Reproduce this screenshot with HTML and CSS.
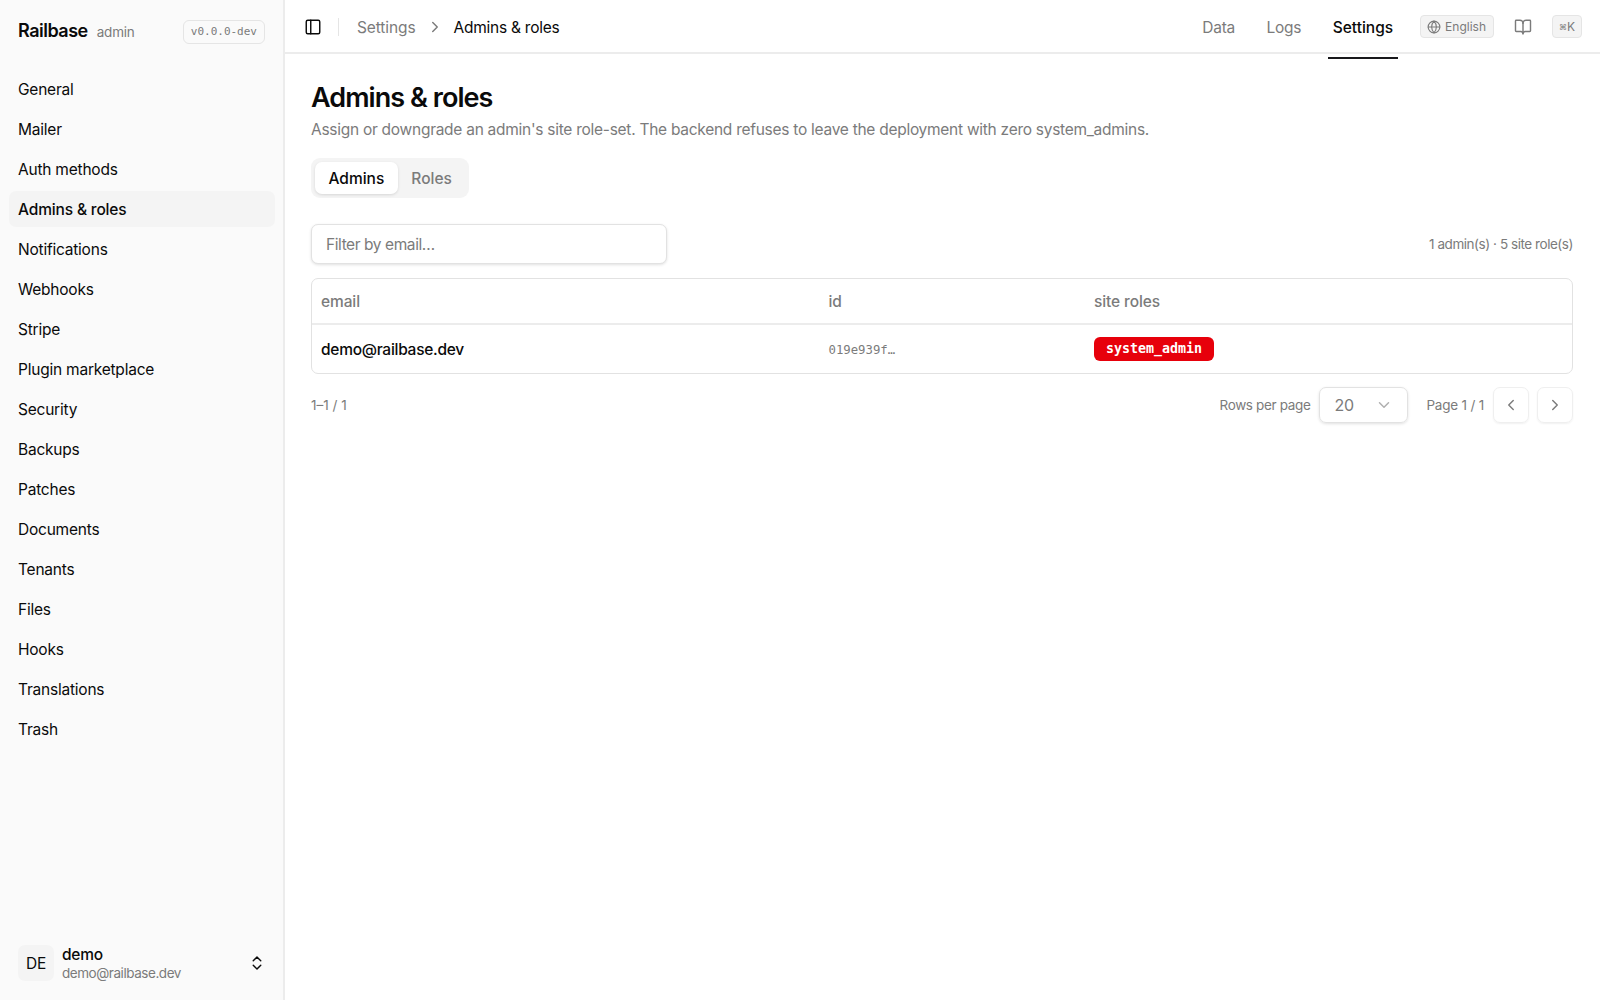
FILE: index.html
```
<!DOCTYPE html>
<html lang="en">
<head>
    <meta charset="UTF-8">
    <title>Railbase admin</title>
    <link rel="stylesheet" href="styles.css">
</head>
<body>
<div class="app">
    <aside class="sidebar">
        <div class="brand">
            <span class="brand-name">Railbase</span>
            <span class="brand-sub">admin</span>
            <span class="version">v0.0.0-dev</span>
        </div>
        <nav class="menu">
            <a class="menu-item">General</a>
            <a class="menu-item">Mailer</a>
            <a class="menu-item">Auth methods</a>
            <a class="menu-item active">Admins &amp; roles</a>
            <a class="menu-item">Notifications</a>
            <a class="menu-item">Webhooks</a>
            <a class="menu-item">Stripe</a>
            <a class="menu-item">Plugin marketplace</a>
            <a class="menu-item">Security</a>
            <a class="menu-item">Backups</a>
            <a class="menu-item">Patches</a>
            <a class="menu-item">Documents</a>
            <a class="menu-item">Tenants</a>
            <a class="menu-item">Files</a>
            <a class="menu-item">Hooks</a>
            <a class="menu-item">Translations</a>
            <a class="menu-item">Trash</a>
        </nav>
        <div class="user">
            <span class="avatar">DE</span>
            <div class="user-info">
                <span class="user-name">demo</span>
                <span class="user-email">demo@railbase.dev</span>
            </div>
            <svg class="icon user-toggle" viewBox="0 0 24 24"><path d="m7 15 5 5 5-5"/><path d="m7 9 5-5 5 5"/></svg>
        </div>
    </aside>

    <div class="page">
        <header class="topbar">
            <svg class="icon panel-icon" viewBox="0 0 24 24"><rect width="18" height="18" x="3" y="3" rx="2"/><path d="M9 3v18"/></svg>
            <span class="separator"></span>
            <span class="crumb">Settings</span>
            <svg class="icon crumb-arrow" viewBox="0 0 24 24"><path d="m9 18 6-6-6-6"/></svg>
            <span class="crumb current">Admins &amp; roles</span>
            <nav class="tabs-top">
                <a class="top-link">Data</a>
                <a class="top-link">Logs</a>
                <a class="top-link active">Settings</a>
            </nav>
            <button class="chip lang">
                <svg class="icon globe" viewBox="0 0 24 24"><circle cx="12" cy="12" r="10"/><path d="M12 2a14.5 14.5 0 0 0 0 20 14.5 14.5 0 0 0 0-20"/><path d="M2 12h20"/></svg>
                <span>English</span>
            </button>
            <svg class="icon book" viewBox="0 0 24 24"><path d="M12 7v14"/><path d="M3 18a1 1 0 0 1-1-1V4a1 1 0 0 1 1-1h5a4 4 0 0 1 4 4 4 4 0 0 1 4-4h5a1 1 0 0 1 1 1v13a1 1 0 0 1-1 1h-6a3 3 0 0 0-3 3 3 3 0 0 0-3-3z"/></svg>
            <button class="chip kbd"><span class="cmd">⌘</span><span>K</span></button>
        </header>

        <main class="content">
            <h1 class="title">Admins &amp; roles</h1>
            <p class="subtitle">Assign or downgrade an admin's site role-set. The backend refuses to leave the deployment with zero system_admins.</p>

            <div class="tabs">
                <button class="tab active">Admins</button>
                <button class="tab">Roles</button>
            </div>

            <div class="toolbar">
                <input class="filter" type="text" placeholder="Filter by email…">
                <span class="summary">1 admin(s) · 5 site role(s)</span>
            </div>

            <div class="table">
                <div class="row head">
                    <span>email</span>
                    <span>id</span>
                    <span>site roles</span>
                </div>
                <div class="row">
                    <span class="email">demo@railbase.dev</span>
                    <span class="id">019e939f…</span>
                    <span class="badge">system_admin</span>
                </div>
            </div>

            <div class="pager">
                <span class="range">1–1 / 1</span>
                <span class="rows-label">Rows per page</span>
                <button class="select">
                    <span>20</span>
                    <svg class="icon select-arrow" viewBox="0 0 24 24"><path d="m6 9 6 6 6-6"/></svg>
                </button>
                <span class="page-no">Page 1 / 1</span>
                <button class="page-btn"><svg class="icon" viewBox="0 0 24 24"><path d="m15 18-6-6 6-6"/></svg></button>
                <button class="page-btn"><svg class="icon" viewBox="0 0 24 24"><path d="m9 18 6-6-6-6"/></svg></button>
            </div>
        </main>
    </div>
</div>
</body>
</html>
```
FILE: styles.css
```
*{
    box-sizing: border-box;
}
body{
    margin: 0;
    font-family: Inter, "Liberation Sans", sans-serif;
    font-size: 15.5px;
    letter-spacing: -0.27px;
    color: #0a0a0a;
    background: #fff;
}
button{
    font: inherit;
    letter-spacing: inherit;
    padding: 0;
    background: none;
    border: 0;
}
.icon{
    flex: none;
    width: 18px;
    height: 18px;
    fill: none;
    stroke: currentColor;
    stroke-width: 1.9;
    stroke-linecap: round;
    stroke-linejoin: round;
}
.app{
    display: flex;
    height: 1000px;
}

/* sidebar */
.sidebar{
    display: flex;
    flex-direction: column;
    width: 285px;
    flex: none;
    background: #fafafa;
    border-right: 2px solid #ececec;
}
.brand{
    display: flex;
    align-items: center;
    height: 64px;
    padding: 0 18px;
}
.brand-name{
    padding-bottom: 3px;
    font-size: 18px;
    font-weight: 600;
    letter-spacing: -0.5px;
}
.brand-sub{
    margin-left: 9px;
    padding-bottom: 1px;
    font-size: 13.5px;
    letter-spacing: -0.2px;
    color: #7b7b7b;
}
.version{
    margin-left: auto;
    padding: 0 7px;
    line-height: 22px;
    border: 1px solid #e5e5e5;
    border-radius: 6px;
    font-family: "DejaVu Sans Mono", monospace;
    font-size: 11px;
    letter-spacing: 0;
    color: #7b7b7b;
}
.menu{
    display: flex;
    flex-direction: column;
    gap: 4px;
    padding: 7px 8px 0 9px;
}
.menu-item{
    height: 36px;
    line-height: 37px;
    padding: 0 9px;
    border-radius: 7px;
    letter-spacing: -0.22px;
}
.menu-item.active{
    background: #f4f4f4;
    font-weight: 500;
    letter-spacing: -0.15px;
}
.user{
    display: flex;
    align-items: center;
    margin-top: auto;
    padding: 0 17px 17px 18px;
}
.avatar{
    width: 36px;
    height: 36px;
    line-height: 37px;
    border-radius: 7px;
    background: #f4f4f4;
    text-align: center;
}
.user-info{
    display: flex;
    flex-direction: column;
    margin-left: 8px;
    padding-top: 2px;
    line-height: 19px;
}
.user-name{
    font-weight: 500;
}
.user-email{
    font-size: 13.5px;
    letter-spacing: -0.45px;
    color: #7b7b7b;
}
.user-toggle{
    margin-left: auto;
}

/* header */
.page{
    flex: 1;
    min-width: 0;
}
.topbar{
    display: flex;
    align-items: center;
    height: 54px;
    padding: 2px 18px 0 19px;
    border-bottom: 2px solid #ececec;
}
.separator{
    width: 1px;
    height: 18px;
    margin: 0 18px 0 16px;
    background: #e5e5e5;
}
.crumb{
    color: #7b7b7b;
    letter-spacing: -0.1px;
}
.crumb-arrow{
    margin: 0 10px;
    color: #7b7b7b;
}
.crumb.current{
    color: #0a0a0a;
    letter-spacing: -0.25px;
}
.tabs-top{
    display: flex;
    gap: 21.5px;
    margin-left: auto;
    margin-right: 22px;
}
.top-link{
    position: relative;
    padding: 0 5px;
    color: #7b7b7b;
}
.top-link.active{
    color: #0a0a0a;
    font-weight: 500;
    letter-spacing: 0;
}
/* underline hangs just below the header border */
.top-link.active::after{
    content: "";
    position: absolute;
    left: 0;
    right: 0;
    bottom: -22px;
    height: 2px;
    background: #18181b;
}
.chip{
    display: flex;
    align-items: center;
    height: 23px;
    margin-bottom: 1px;
    border: 1px solid #e5e5e5;
    border-radius: 4px;
    background: #f4f4f4;
    font-size: 12px;
    letter-spacing: 0;
    color: #7b7b7b;
}
.lang{
    gap: 4px;
    padding: 0 7px 0 6px;
}
.globe{
    width: 14px;
    height: 14px;
}
.book{
    margin: 0 20px;
    color: #7b7b7b;
}
.kbd{
    justify-content: center;
    width: 30px;
}
.cmd{
    font-size: 8px;
}

/* content */
.content{
    padding: 28px 27px 0 26px;
}
.title{
    margin: 0;
    font-size: 27px;
    line-height: 32px;
    font-weight: 600;
    letter-spacing: -0.95px;
}
.subtitle{
    margin: 3px 0 0;
    line-height: 26px;
    color: #7b7b7b;
}
.tabs{
    display: inline-flex;
    margin-top: 15px;
    padding: 4px;
    border-radius: 9px;
    background: #f4f4f4;
}
.tab{
    height: 32px;
    padding: 0 13.5px;
    border-radius: 7px;
    font-weight: 500;
    letter-spacing: 0;
    color: #7b7b7b;
}
.tab.active{
    background: #fff;
    color: #0a0a0a;
    box-shadow: 0 1px 3px rgba(0,0,0,.12);
}
.toolbar{
    display: flex;
    align-items: center;
    justify-content: space-between;
    margin-top: 26px;
}
.filter{
    width: 356px;
    height: 40px;
    padding: 0 14px;
    border: 1px solid #e2e2e2;
    border-radius: 7px;
    font: inherit;
    letter-spacing: -0.42px;
    box-shadow: 0 1px 3px rgba(0,0,0,.12);
}
.filter::placeholder{
    color: #7b7b7b;
}
.summary,
.pager{
    font-size: 13.5px;
    color: #7b7b7b;
}
.summary{
    letter-spacing: -0.45px;
}
.table{
    margin-top: 14px;
    border: 1px solid #e2e2e2;
    border-radius: 7px;
}
.row{
    display: grid;
    grid-template-columns: 507.5px 265.5px 1fr;
    align-items: center;
    height: 48px;
    padding-left: 9px;
}
.row.head{
    height: 46px;
    border-bottom: 2px solid #ececec;
    font-weight: 500;
    letter-spacing: -0.1px;
    color: #7b7b7b;
}
.email{
    font-weight: 500;
}
.id{
    padding-top: 1px;
    font-family: "DejaVu Sans Mono", monospace;
    font-size: 12.3px;
    letter-spacing: 0;
    color: #7b7b7b;
}
.badge{
    justify-self: start;
    height: 24px;
    line-height: 24px;
    padding: 0 12px;
    border-radius: 6px;
    background: #e7000b;
    color: #fff;
    font-family: "DejaVu Sans Mono", monospace;
    font-size: 13.3px;
    font-weight: 700;
    letter-spacing: 0;
}
.pager{
    display: flex;
    align-items: center;
    margin-top: 13px;
    letter-spacing: -0.2px;
}
.range{
    letter-spacing: 0;
}
.rows-label{
    margin-left: auto;
    letter-spacing: -0.35px;
}
.select{
    display: flex;
    align-items: center;
    justify-content: space-between;
    width: 89px;
    height: 36px;
    margin: 0 18px 0 9px;
    padding: 0 14px;
    border: 1px solid #e2e2e2;
    border-radius: 7px;
    font-size: 16px;
    color: #7b7b7b;
    box-shadow: 0 1px 3px rgba(0,0,0,.12);
}
.select-arrow{
    opacity: .6;
}
.page-btn{
    display: flex;
    align-items: center;
    justify-content: center;
    width: 36px;
    height: 36px;
    margin-left: 8.5px;
    border: 1px solid #efefef;
    border-radius: 7px;
    color: #7b7b7b;
    box-shadow: 0 1px 2px rgba(0,0,0,.06);
}
```
